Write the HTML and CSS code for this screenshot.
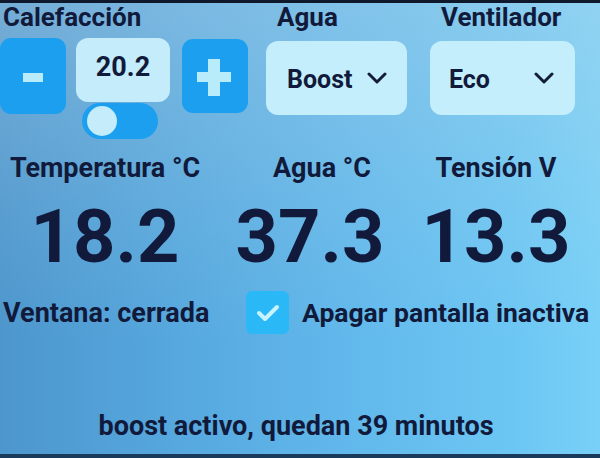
FILE: index.html
```html
<!DOCTYPE html>
<html lang="es">
<head>
<meta charset="utf-8">
<title>Panel</title>
<link rel="stylesheet" href="styles.css">
</head>
<body>
<div class="screen">
  <div class="top">
    <div class="group heat">
      <div class="label">Calefacción</div>
      <div class="controls">
        <div class="btn minus"><span class="bar"></span></div>
        <div class="center">
          <div class="value">20.2</div>
          <div class="toggle"><span class="knob"></span></div>
        </div>
        <div class="btn plus"><span class="bar h"></span><span class="bar v"></span></div>
      </div>
    </div>
    <div class="group water">
      <div class="label sub">Agua</div>
      <div class="dropdown">
        <span class="dd-text">Boost</span>
        <svg class="chev" viewBox="0 0 20 12" width="20" height="12"><path d="M2 2 L10 10 L18 2" fill="none" stroke="#141c3c" stroke-width="3" stroke-linecap="round" stroke-linejoin="round"/></svg>
      </div>
    </div>
    <div class="group fan">
      <div class="label sub">Ventilador</div>
      <div class="dropdown wide">
        <span class="dd-text">Eco</span>
        <svg class="chev" viewBox="0 0 20 12" width="20" height="12"><path d="M2 2 L10 10 L18 2" fill="none" stroke="#141c3c" stroke-width="3" stroke-linecap="round" stroke-linejoin="round"/></svg>
      </div>
    </div>
  </div>

  <div class="readings">
    <div class="rlabel">Temperatura °C</div>
    <div class="rlabel mid">Agua °C</div>
    <div class="rlabel">Tensión V</div>
    <div class="rvalue">18.2</div>
    <div class="rvalue mid">37.3</div>
    <div class="rvalue">13.3</div>
  </div>

  <div class="status">
    <div class="window">Ventana: cerrada</div>
    <div class="check">
      <span class="box"><svg viewBox="0 0 24 20" width="24" height="20"><path d="M3 10 L9 16 L21 4" fill="none" stroke="#c6f3ff" stroke-width="4" stroke-linecap="round" stroke-linejoin="round"/></svg></span>
      <span class="check-text">Apagar pantalla inactiva</span>
    </div>
  </div>

  <div class="footer">boost activo, quedan 39 minutos</div>
</div>
</body>
</html>
```
FILE: styles.css
```css
html, body {
  margin: 0;
  padding: 0;
}
body {
  width: 600px;
  height: 458px;
  overflow: hidden;
  font-family: Roboto, "Liberation Sans", sans-serif;
  font-weight: 700;
  color: #111a3a;
}
.screen {
  box-sizing: border-box;
  width: 600px;
  height: 458px;
  border-top: 3px solid #10192c;
  border-bottom: 4px solid #1a3a5c;
  background:
    linear-gradient(180deg, rgba(190, 215, 230, 0.35) 0%, rgba(190, 215, 230, 0.12) 45%, rgba(190, 215, 230, 0) 75%),
    linear-gradient(90deg, #4c96cd 0%, #56a8de 30%, #62b9ec 60%, #6cc6f3 85%, #78d0f7 100%);
  display: flex;
  flex-direction: column;
}
.top {
  display: flex;
}
.label {
  font-size: 26px;
  line-height: 28px;
  height: 35px;
  padding-left: 3px;
  white-space: nowrap;
}
.label.sub {
  padding-left: 11px;
}
.controls {
  display: flex;
  align-items: flex-start;
}
.btn {
  width: 66px;
  height: 76px;
  border-radius: 11px;
  background: #1d9ff0;
  display: flex;
  align-items: center;
  justify-content: center;
  position: relative;
}
.minus .bar {
  width: 20px;
  height: 9px;
  background: #b9ecfb;
  margin-top: 3px;
}
.plus {
  margin-left: 12px;
  margin-top: 1px;
  height: 74px;
}
.plus .bar {
  position: absolute;
  background: #b9ecfb;
}
.plus .h {
  width: 34px;
  height: 10px;
  left: 15px;
  top: 33px;
}
.plus .v {
  width: 12px;
  height: 37px;
  left: 26px;
  top: 20px;
}
.center {
  margin-left: 10px;
  width: 94px;
  display: flex;
  flex-direction: column;
}
.value {
  width: 94px;
  height: 64px;
  border-radius: 12px;
  background: #c4ecfa;
  font-size: 27px;
  line-height: 30px;
  text-align: center;
  padding-top: 14px;
  box-sizing: border-box;
}
.toggle {
  margin-top: 1px;
  margin-left: 6px;
  width: 76px;
  height: 36px;
  border-radius: 18px;
  background: #1d9ff0;
  display: flex;
  align-items: center;
  padding-left: 5px;
  box-sizing: border-box;
}
.knob {
  width: 30px;
  height: 30px;
  border-radius: 50%;
  background: #c4ecfa;
}
.water {
  margin-left: 18px;
}
.fan {
  margin-left: 23px;
}
.dropdown {
  margin-top: 3px;
  width: 141px;
  height: 74px;
  border-radius: 12px;
  background: #c4eefb;
  display: flex;
  align-items: center;
  padding-left: 21px;
  padding-right: 20px;
  box-sizing: border-box;
  justify-content: space-between;
  font-size: 25px;
}
.dropdown.wide {
  width: 145px;
  padding-left: 19px;
  padding-right: 21px;
}
.dd-text {
  margin-top: 2px;
}
.readings {
  margin-top: 15px;
  display: grid;
  grid-template-columns: 210px 208px 156px;
  row-gap: 18px;
}
.rlabel {
  font-size: 27px;
  line-height: 28px;
  text-align: center;
  white-space: nowrap;
}
.rlabel.mid {
  padding-left: 16px;
}
.rvalue {
  font-size: 74px;
  line-height: 74px;
  text-align: center;
}
.rvalue.mid {
  padding-right: 8px;
}
.status {
  margin-top: 17px;
  display: flex;
  align-items: center;
  font-size: 27px;
  line-height: 28px;
  white-space: nowrap;
}
.window {
  padding-left: 3px;
  width: 243px;
}
.check {
  display: flex;
  align-items: center;
}
.box {
  width: 43px;
  height: 43px;
  border-radius: 6px;
  background: #2ab8f6;
  display: flex;
  align-items: center;
  justify-content: center;
}
.check-text {
  margin-left: 13px;
  font-size: 26.5px;
}
.footer {
  margin-top: 78px;
  text-align: center;
  font-size: 27px;
  line-height: 28px;
  padding-right: 8px;
  white-space: nowrap;
}
```
